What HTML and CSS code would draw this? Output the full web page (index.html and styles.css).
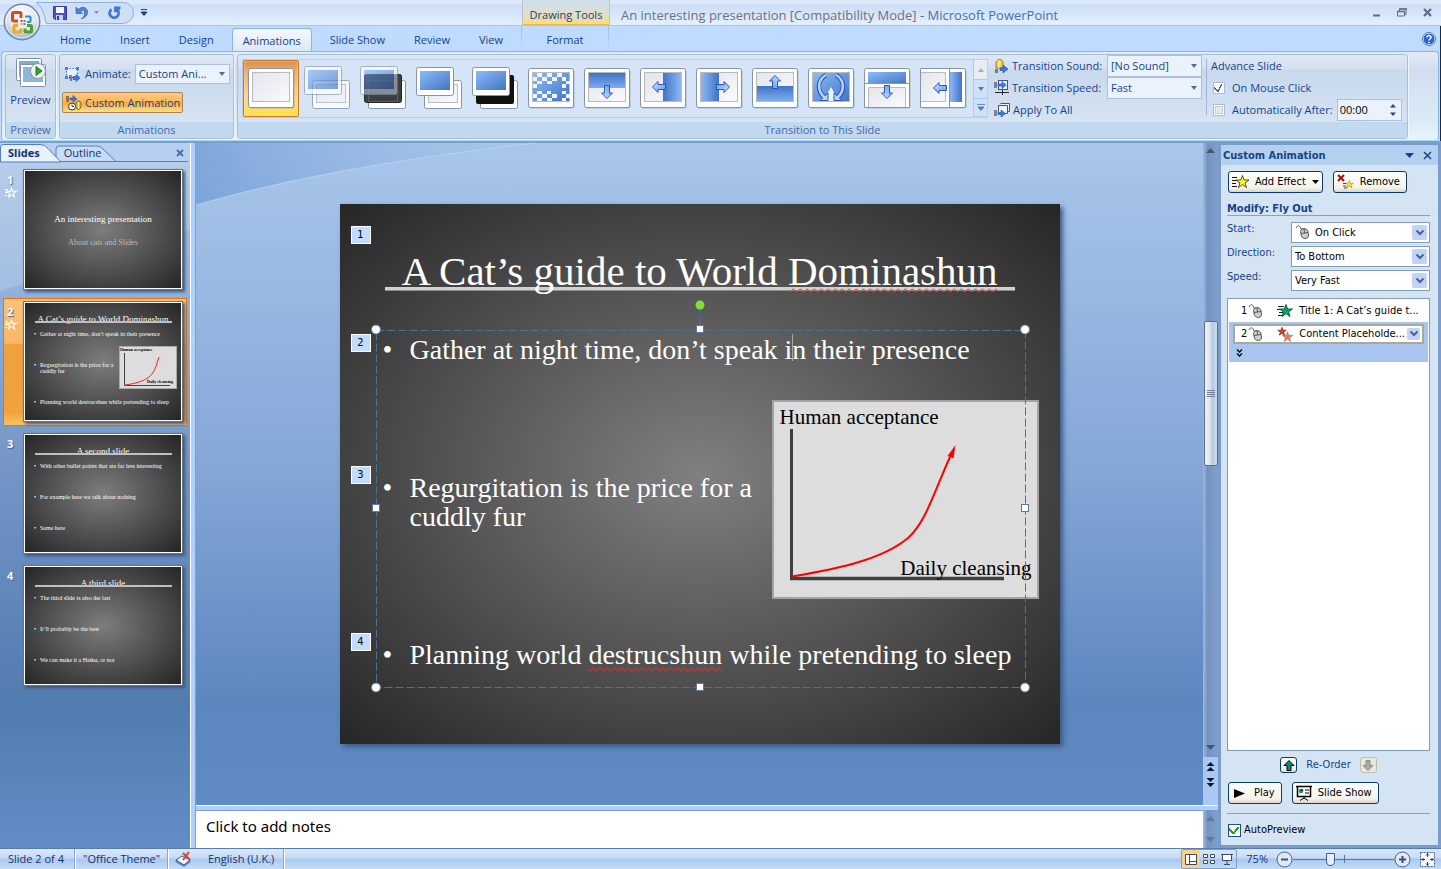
FILE: index.html
```
<!DOCTYPE html>
<html lang="en-GB">
<head>
<meta charset="utf-8">
<title>An interesting presentation [Compatibility Mode] - Microsoft PowerPoint</title>
<link rel="stylesheet" href="styles.css">
</head>
<body>
<svg class="defs" width="0" height="0" aria-hidden="true">
  <defs>
    <linearGradient id="blue" x1="0" y1="0" x2="1" y2="1"><stop offset="0" stop-color="#8dbcf8"/><stop offset="1" stop-color="#4274c4"/></linearGradient>
    <linearGradient id="blueH" x1="0" y1="0" x2="1" y2="0"><stop offset="0" stop-color="#3f73c6"/><stop offset="1" stop-color="#8db8f5"/></linearGradient>
    <linearGradient id="blueR" x1="1" y1="0" x2="0" y2="0"><stop offset="0" stop-color="#3f73c6"/><stop offset="1" stop-color="#8db8f5"/></linearGradient>
    <linearGradient id="blueV" x1="0" y1="0" x2="0" y2="1"><stop offset="0" stop-color="#3f73c6"/><stop offset="1" stop-color="#7eacf0"/></linearGradient>
    <linearGradient id="paper" x1="0" y1="0" x2="1" y2="1"><stop offset="0" stop-color="#e3e5ec"/><stop offset="1" stop-color="#fafafd"/></linearGradient>
    <linearGradient id="arrowFill" x1="0" y1="0" x2="1" y2="1"><stop offset="0" stop-color="#d3e6ff"/><stop offset="1" stop-color="#5b92ec"/></linearGradient>
    <linearGradient id="wave" x1="0" y1="0" x2="1" y2="0"><stop offset="0" stop-color="#5f8ecf" stop-opacity=".55"/><stop offset="1" stop-color="#7fa9de" stop-opacity="0"/></linearGradient>
    <radialGradient id="orb" cx=".5" cy=".3" r=".75"><stop offset="0" stop-color="#ffffff"/><stop offset=".55" stop-color="#dfe6ef"/><stop offset="1" stop-color="#8fa3bd"/></radialGradient>
    <g id="frame"><rect x="6.500" y="9.500" width="45" height="39" rx="2" fill="#7f8fa3" opacity=".5"/><rect x="5.500" y="8.500" width="45" height="39" rx="2" fill="#fff" stroke="#8495ab"/></g>
    <g id="card"><rect x=".5" y=".5" width="37" height="28" rx="2" fill="#fff" stroke="#8495ab"/></g>
    <path id="arr" d="M-6.500 0L-1-5.500V-2.500H6.500V2.500H-1V5.500Z" fill="url(#arrowFill)" stroke="#2a56b8"/>
    <g id="mouse"><path d="M0 3C2-1 4 1 4.500 3S6 4 7 3.500" fill="none" stroke="#555"/><path d="M4.500 6.500Q5 3.500 8 3.500T12 6.500L12.500 11Q12 13.500 9.500 13.500T5.500 11.500Z" fill="#cfcfcf" stroke="#555"/><path d="M5 8.500L12 7.500M8 3.500l.5 4.500" stroke="#555" fill="none"/></g>
    <path id="star" d="M0-6.500L1.600-2H6.500L2.600 .8 4 5.500 0 2.600-4 5.500-2.600 .8-6.500-2H-1.600Z"/>
  </defs>
</svg>

<header class="titlebar">
  <div class="quick">
    <svg class="quick-shape" width="100" height="26" viewBox="0 0 100 26"><path d="M0 2.500H87a10.500 10.500 0 0 1 0 21H10C8 13 6 6 0 2.500Z" fill="#cfe0f6" stroke="#8fb1de"/></svg>
    <button class="tool save" aria-label="Save"><svg width="14" height="14" viewBox="0 0 14 14"><path d="M.5 .5H13.500V13.500H2L.5 12Z" fill="#4d55b8" stroke="#343b96"/><rect x="3" y="1" width="8" height="6" fill="#f4f6ff"/><rect x="3" y="9" width="7" height="5" fill="#c9cfe9"/><rect x="4" y="10" width="2" height="4" fill="#343b96"/></svg></button>
    <button class="tool undo" aria-label="Undo"><svg width="14" height="14" viewBox="0 0 14 14"><path d="M1 1V7.500H7.500L5.500 5.500C8 3.500 10 5 9.500 8 9.200 10 8 11.500 6.500 13 11 11.500 13 8.500 12.500 5 11.500 1 7 0 3.500 3.300Z" fill="#4f82d8" stroke="#3463b8" stroke-width=".7"/></svg></button>
    <svg width="5" height="3" viewBox="0 0 5 3"><path d="M0 0H5L2.500 3Z" fill="#6d94cb"/></svg>
    <button class="tool redo" aria-label="Repeat"><svg width="13" height="14" viewBox="0 0 13 14"><path d="M3.500 3.500A4.500 4.500 0 1 0 9.800 4.500" fill="none" stroke="#4277d2" stroke-width="2.800"/><path d="M6 .5H12.500V2.500L9.500 6.500 6 6Z" fill="#4277d2"/></svg></button>
    <button class="tool more" aria-label="Customise toolbar"><svg width="6" height="7" viewBox="0 0 6 7"><path d="M0 .5H6M0 3H6L3 6.500Z" stroke="#23408a" stroke-width="1" fill="#23408a"/></svg></button>
  </div>
  <div class="context-title">Drawing Tools</div>
  <h1 class="window-title">An interesting presentation [Compatibility Mode] <span>- Microsoft PowerPoint</span></h1>
  <div class="window-buttons">
    <button aria-label="Minimise"><svg width="9" height="9"><path d="M1 7.500H8" stroke="#5b6d88" stroke-width="2"/></svg></button>
    <button aria-label="Restore"><svg width="10" height="9"><path d="M2.500 3V1H9V6.500H7.500M.5 3.500H7.500V8H.5Z" fill="none" stroke="#5b6d88"/><path d="M0 3.500H8M2 1H10" stroke="#5b6d88" stroke-width="1.500"/></svg></button>
    <button aria-label="Close"><svg width="9" height="9"><path d="M1 1L8 8M8 1L1 8" stroke="#5b6d88" stroke-width="2.200"/></svg></button>
  </div>
  <button class="orb" aria-label="Office Button"><svg width="38" height="38" viewBox="0 0 38 38"><circle cx="19" cy="19" r="17.800" fill="url(#orb)" stroke="#7388a5" stroke-width="1.400"/><circle cx="19" cy="19" r="16" fill="none" stroke="#fff" opacity=".7"/><g fill="none" stroke-width="3"><path d="M15 18H11a1.500 1.500 0 0 1-1.500-1.500V11a1.500 1.500 0 0 1 1.500-1.500H16.500A1.500 1.500 0 0 1 18 11V15" stroke="#d9481c"/><path d="M22 13.500h4.500a1 1 0 0 1 1 1v3.500a1 1 0 0 1-1 1H24" stroke="#3a87d2" stroke-width="2.200"/><path d="M24 22.500H27.500a1 1 0 0 1 1 1v4.500a1 1 0 0 1-1 1H23a1 1 0 0 1-1-1V25.500" stroke="#4f9f2c"/><path d="M15 22.500h-3a1 1 0 0 0-1 1V28a1 1 0 0 0 1 1h5a1 1 0 0 0 1-1V25.500" stroke="#f3a81c"/></g><rect x="17.500" y="17" width="2" height="2" fill="#d7421a"/><rect x="20.500" y="17" width="2" height="2" fill="#3a87d2"/><rect x="17.500" y="20" width="2" height="2" fill="#f3a81c"/><rect x="20.500" y="20" width="2" height="2" fill="#4f9f2c"/></svg></button>
</header>

<nav class="tabs">
  <button>Home</button><button>Insert</button><button>Design</button><button class="active">Animations</button><button>Slide Show</button><button>Review</button><button>View</button>
  <button class="context-tab">Format</button>
  <button class="help" aria-label="Help"><svg width="14" height="14" viewBox="0 0 14 14"><circle cx="7" cy="7" r="6" fill="#2a62d8" stroke="#fff"/><circle cx="7" cy="7" r="6.500" fill="none" stroke="#5578b8"/><path d="M5 5.500C5 3 9 3 9 5.300 9 7 7 7 7 8.500M7 9.700V11.200" fill="none" stroke="#fff" stroke-width="1.500"/></svg></button>
</nav>

<section class="ribbon">
  <div class="group preview">
    <button class="group-body preview-button">
      <svg width="30" height="30" viewBox="0 0 30 30"><rect x=".5" y=".5" width="25" height="22" rx="1" fill="#fff" stroke="#7e90a8"/><rect x="3" y="3" width="20" height="16" fill="#79acd8"/><rect x="4.500" y="6.500" width="25" height="22" rx="1" fill="#fff" stroke="#7e90a8"/><rect x="7" y="9" width="20" height="15" fill="#8ab8dd"/><circle cx="22" cy="13" r="7.500" fill="#eef3f3" stroke="#8b9a9e"/><path d="M20 8.500L26 13 20 17.500Z" fill="#38a32b" stroke="#1d7a1c"/></svg>
      <span>Preview</span>
    </button>
    <div class="group-label">Preview</div>
  </div>
  <div class="group animations">
    <div class="group-body">
      <div class="row">
        <svg width="17" height="16" viewBox="0 0 17 16"><path d="M2.500 2.500H13.500V11.500H2.500Z" fill="#e6eefa" stroke="#3c6fb5" stroke-dasharray="1.500 1.500"/><path d="M1 1h3v3H1zM12 1h3v3h-3zM1 10h3v3H1z" fill="#4c7fc5"/><path d="M5 10h3M5 12h3M6 14h2" stroke="#223"/><path d="M9 10.500H12V8.500L16 12 12 15.500V13.500H9Z" fill="#3d79df" stroke="#1c4fae" stroke-width=".6"/></svg>
        <label for="animate">Animate:</label>
        <div class="pick animate-pick"><select id="animate"><option>Custom Ani...</option></select><svg width="6" height="4"><path d="M0 0H6L3 4Z" fill="#4a6fa5"/></svg></div>
      </div>
      <button class="custom-button"><svg width="17" height="16" viewBox="0 0 17 16"><path d="M1 2h3M1 4h3M1 6h3" stroke="#223"/><path d="M5 3H8V.5L12 4 8 7V5H5Z" fill="#3d79df" stroke="#1c4fae" stroke-width=".6"/><circle cx="7" cy="11.500" r="3.500" fill="#fff" stroke="#333"/><path d="M7 9.500V11.500H9" fill="none" stroke="#333"/><path d="M12 6.500C15 5 16 7 16 10S15 15.500 12 14C10 12 10.500 8 12 6.500Z" fill="#e9b53a" stroke="#8a6213"/><path d="M13.500 7v7" stroke="#fff3b8"/></svg>Custom Animation</button>
    </div>
    <div class="group-label">Animations</div>
  </div>
  <div class="group transition">
    <div class="group-body transition-body">
      <div class="gallery">
        <button class="chosen" aria-label="No transition"><svg width="56" height="56"><use href="#frame"/><rect x="9.500" y="12.500" width="37" height="29" fill="url(#paper)" stroke="#bbb"/></svg></button>
        <button aria-label="Fade smoothly"><svg width="56" height="56"><g opacity=".8"><use href="#card" x="13" y="20"/><rect x="17.500" y="24.500" width="29" height="18" fill="url(#paper)" stroke="#bbb"/></g><g opacity=".65"><use href="#card" x="5" y="6"/><rect x="9" y="10" width="30" height="19" fill="url(#blue)"/></g></svg></button>
        <button aria-label="Fade through black"><svg width="56" height="56"><use href="#card" x="13" y="20"/><rect x="9.500" y="14.500" width="37" height="28" rx="2" fill="#3c3f44" stroke="#222"/><rect x="13.500" y="20.500" width="29" height="21" fill="none" stroke="#5a5d63"/><g opacity=".65"><use href="#card" x="5" y="6"/><rect x="9" y="10" width="30" height="19" fill="url(#blue)"/></g><path d="M9 14.500H43V34H9Z" fill="#25364f" opacity=".35"/></svg></button>
        <button aria-label="Cut"><svg width="56" height="56"><use href="#card" x="13" y="20"/><rect x="17.500" y="24.500" width="29" height="18" fill="url(#paper)" stroke="#bbb"/><use href="#card" x="5" y="7"/><rect x="9" y="11" width="30" height="19" fill="url(#blue)"/></svg></button>
        <button aria-label="Cut through black"><svg width="56" height="56"><use href="#card" x="13" y="20"/><rect x="9" y="15" width="38" height="29" rx="2" fill="#111"/><use href="#card" x="5" y="7"/><rect x="9" y="11" width="30" height="19" fill="url(#blue)"/></svg></button>
        <button aria-label="Dissolve"><svg width="56" height="56"><use href="#frame"/><rect x="9.500" y="12.500" width="37" height="29" fill="url(#blue)" stroke="#bbb"/><path d="M14 13h5v4h-5zM24 13h5v4h-5zM34 13h5v4h-5zM10 17h4v4h-4zM19 17h5v4h-5zM29 17h5v4h-5zM39 17h4v4h-4zM14 21h5v3h-5zM24 21h5v3h-5zM43 21h4v3h-4zM10 24h4v4h-4zM39 24h4v4h-4zM14 31h5v3h-5zM10 34h4v4h-4zM19 34h5v4h-5zM24 31h4v3h-4zM29 34h5v4h-5zM39 31h4v3h-4zM43 34h4v4h-4zM14 38h5v3h-5zM24 38h5v3h-5zM39 38h4v3h-4z" fill="#f2f4f9"/></svg></button>
        <button aria-label="Wipe down"><svg width="56" height="56"><use href="#frame"/><rect x="9.500" y="12.500" width="37" height="29" fill="url(#paper)" stroke="#bbb"/><rect x="10" y="13" width="36" height="15" fill="url(#blueV)"/><use href="#arr" transform="translate(28 32) rotate(-90)"/></svg></button>
        <button aria-label="Wipe left"><svg width="56" height="56"><use href="#frame"/><rect x="9.500" y="12.500" width="37" height="29" fill="url(#paper)" stroke="#bbb"/><rect x="28" y="13" width="18" height="28" fill="url(#blueH)"/><use href="#arr" transform="translate(24 27)"/></svg></button>
        <button aria-label="Wipe right"><svg width="56" height="56"><use href="#frame"/><rect x="9.500" y="12.500" width="37" height="29" fill="url(#paper)" stroke="#bbb"/><rect x="10" y="13" width="18" height="28" fill="url(#blueR)"/><use href="#arr" transform="translate(32 27) rotate(180)"/></svg></button>
        <button aria-label="Wipe up"><svg width="56" height="56"><use href="#frame"/><rect x="9.500" y="12.500" width="37" height="29" fill="url(#paper)" stroke="#bbb"/><rect x="10" y="26" width="36" height="15" fill="url(#blueV)"/><use href="#arr" transform="translate(28 22) rotate(90)"/></svg></button>
        <button aria-label="Wedge"><svg width="56" height="56"><use href="#frame"/><rect x="9.500" y="12.500" width="37" height="29" fill="url(#blue)" stroke="#bbb"/><path d="M28 27L36 41H20Z" fill="#eef1f8"/><g fill="none" stroke="#2a56b8" stroke-width="4.500"><path d="M23 15C14 20 14 31 21 37"/><path d="M33 15C42 20 42 31 35 37"/></g><path d="M25 33V40.500H17ZM31 33V40.500H39Z" fill="#b9d5fc" stroke="#2a56b8"/><g fill="none" stroke="#b9d5fc" stroke-width="2.500"><path d="M23 15C14 20 14 31 22 38"/><path d="M33 15C42 20 42 31 34 38"/></g></svg></button>
        <button aria-label="Uncover down"><svg width="56" height="56"><use href="#frame"/><rect x="9" y="12" width="38" height="12" fill="url(#blue)"/><path d="M5.500 23.500H50.500V47.500H5.500Z" fill="#fff" stroke="#8495ab"/><path d="M9.500 47V27.500H46.500V47" fill="url(#paper)" stroke="#bbb"/><use href="#arr" transform="translate(28 32) rotate(-90)"/></svg></button>
        <button aria-label="Uncover left"><svg width="56" height="56"><use href="#frame"/><rect x="35" y="12" width="12" height="30" fill="url(#blueR)"/><path d="M5.500 8.500H34.500V47.500H5.500Z" fill="#fff" stroke="#8495ab"/><path d="M6 12.500H30.500V41.500H6" fill="url(#paper)" stroke="#bbb"/><use href="#arr" transform="translate(25 28)"/></svg></button>
        <div class="gallery-scroll">
          <button disabled aria-label="Previous row"><svg width="6" height="4"><path d="M3 0L6 4H0Z" fill="#a9a9b0"/></svg></button>
          <button aria-label="Next row"><svg width="6" height="4"><path d="M0 0H6L3 4Z" fill="#4f78bb"/></svg></button>
          <button aria-label="More"><svg width="8" height="7"><path d="M0 .5H8M1 3H7L4 6.500Z" fill="#4f78bb" stroke="#4f78bb" stroke-width=".8"/></svg></button>
        </div>
      </div>
      <div class="options">
        <svg width="15" height="15" viewBox="0 0 15 15"><path d="M2 3C4-1 8 0 9 3V9H2Z" fill="#f3cf55" stroke="#a27a18"/><path d="M5 1v8" stroke="#fff6c8"/><path d="M1 11h3M1 13h3" stroke="#223"/><path d="M6 9H9V6L14 10 9 14V11.500H6Z" fill="#3d79df" stroke="#1c4fae" stroke-width=".6"/></svg>
        <label for="sound">Transition Sound:</label>
        <div class="pick"><select id="sound"><option>[No Sound]</option></select><svg width="6" height="4"><path d="M0 0H6L3 4Z" fill="#4a6fa5"/></svg></div>
        <svg width="15" height="16" viewBox="0 0 15 16"><rect x="4.500" y=".5" width="9" height="9" fill="#dfe9f8" stroke="#43557a"/><path d="M0 3h3M0 5h3M0 7h3M1 12.500H15M8.500 10V15" stroke="#223"/><path d="M4 4H8V1.500L12 5 8 8.500V6H4Z" fill="#3d79df" stroke="#1c4fae" stroke-width=".6"/></svg>
        <label for="speed">Transition Speed:</label>
        <div class="pick"><select id="speed"><option>Fast</option></select><svg width="6" height="4"><path d="M0 0H6L3 4Z" fill="#4a6fa5"/></svg></div>
        <button class="apply-all"><svg width="16" height="15" viewBox="0 0 16 15"><path d="M6.500 .5H15.500V8.500H13M4.500 2.500H13.500V10.500H4.500Z" fill="#eef3fb" stroke="#43557a"/><path d="M0 8h3M0 10h3M0 12h3" stroke="#223"/><path d="M4 9.500H7V7L11.500 10.500 7 14V11.500H4Z" fill="#3d79df" stroke="#1c4fae" stroke-width=".6"/></svg>Apply To All</button>
      </div>
      <div class="advance">
        <div>Advance Slide</div>
        <label><input type="checkbox" checked>On Mouse Click</label>
        <div class="auto"><label><input type="checkbox">Automatically After:</label>
          <div class="spin"><input type="text" value="00:00" aria-label="Automatically after"><svg width="6" height="12"><path d="M3 0L6 3.500H0ZM3 12L6 8.500H0Z" fill="#23478c"/></svg></div></div>
      </div>
    </div>
    <div class="group-label">Transition to This Slide</div>
  </div>
</section>

<main class="workspace">
  <aside class="slides-panel">
    <div class="panel-tabs">
      <svg class="panel-tabs-shape" width="188" height="19" viewBox="0 0 188 19"><path d="M56 18.500V6q0-3 3-3H97q4 0 7 4L116 18.500Z" fill="#c9dcf6" stroke="#4f7fbf"/><path d="M0 18.500H188" stroke="#4f7fbf"/><path d="M.5 19V4Q.5 1.500 4 1.500H40q5 0 8 4L61 19Z" fill="#e9f1fd" stroke="#4f7fbf"/></svg>
      <button class="on">Slides</button><button>Outline</button>
      <button class="panel-close" aria-label="Close"><svg width="8" height="8"><path d="M1 1L7 7M7 1L1 7" stroke="#3d6fae" stroke-width="1.800"/></svg></button>
    </div>
    <ol class="thumbs">
      <li><div class="num">1<svg width="12" height="11" viewBox="0 0 12 11"><path d="M0 2.500H3M0 5.500H3M0 8.500H2" stroke="#fff"/><use href="#star" transform="translate(6.500 5.800) scale(.72)" fill="none" stroke="#fff" stroke-width="1.500"/></svg></div>
        <div class="thumb cover"><b>An interesting presentation</b><i>About cats and Slides</i></div></li>
      <li class="current"><div class="num">2<svg width="12" height="11" viewBox="0 0 12 11"><path d="M0 2.500H3M0 5.500H3M0 8.500H2" stroke="#fff"/><use href="#star" transform="translate(6.500 5.800) scale(.72)" fill="none" stroke="#fff" stroke-width="1.500"/></svg></div>
        <div class="thumb guide"><b>A Cat’s guide to World Dominashun</b><p>Gather at night time, don’t speak in their presence</p><p>Regurgitation is the price for a cuddly fur</p><p>Planning world destrucshun while pretending to sleep</p>
          <div class="mini-chart"><svg viewBox="0 0 58 43" width="58" height="43"><path d="M4.500 6V38.500H50" fill="none" stroke="#444"/><path d="M5 38C20 36 28 32 32 27S37 15 39 10" fill="none" stroke="#f22"/></svg><span>Human acceptance</span><span>Daily cleansing</span></div></div></li>
      <li><div class="num">3</div><div class="thumb"><b>A second slide</b><p>With other bullet points that are far less interesting</p><p>For example here we talk about nothing</p><p>Same here</p></div></li>
      <li><div class="num">4</div><div class="thumb"><b>A third slide</b><p>The third slide is also the last</p><p>It’ll probably be the best</p><p>We can make it a Haiku, or not</p></div></li>
    </ol>
  </aside>
  <div class="splitter"></div>
  <section class="editor">
    <div class="stage">
      <svg class="swoosh" viewBox="0 0 1009 662" preserveAspectRatio="none"><path d="M0 0H340C200 16 90 36 0 62Z" fill="url(#wave)"/><path d="M0 62C90 36 200 16 340 0" fill="none" stroke="#c4dbf6" opacity=".6"/></svg>
      <div class="slide">
        <div class="title-rule"></div>
        <h2>A Cat’s guide to World <u>Dominashun</u></h2>
        <ul>
          <li>Gather at night time, don’t speak in their presence</li>
          <li>Regurgitation is the price for a cuddly fur</li>
          <li>Planning world <u>destrucshun</u> while pretending to sleep</li>
        </ul>
        <figure class="chart">
          <figcaption>Human acceptance</figcaption>
          <svg width="267" height="198" viewBox="0 0 267 198"><path d="M19.500 29V178.500" stroke="#404040" stroke-width="3"/><path d="M18 178.500H232" stroke="#404040" stroke-width="3.500"/><path d="M20 176.500C72 168 112 158 136 138C154 122 162 92 178 57" fill="none" stroke="#f00" stroke-width="2"/><path d="M183.500 45L181.500 58.500 175.500 56Z" fill="#f00"/></svg>
          <span>Daily cleansing</span>
        </figure>
        <svg class="selection" width="720" height="540" viewBox="0 0 720 540"><path d="M36.500 126.500H685.500V483.500H36.500ZM360.500 101V126" fill="none" stroke="#4d7298" stroke-dasharray="8 3"/><path d="M452.500 130V157" stroke="#a8a8a8"/><g fill="#fff" stroke="#5c7b9c"><circle cx="36" cy="125.500" r="4.500"/><circle cx="685" cy="125.500" r="4.500"/><circle cx="36" cy="483.500" r="4.500"/><circle cx="685" cy="483.500" r="4.500"/><rect x="356.500" y="121.500" width="7" height="7"/><rect x="356.500" y="479.500" width="7" height="7"/><rect x="32.500" y="300.500" width="7" height="7"/><rect x="681.500" y="300.500" width="7" height="7"/></g><circle cx="360" cy="101" r="4.500" fill="#82dc3a"/></svg>
        <span class="badge one">1</span><span class="badge two">2</span><span class="badge three">3</span><span class="badge four">4</span>
      </div>
    </div>
    <div class="scroll stage-scroll">
      <svg width="9" height="5"><path d="M4.500 0L9 5H0Z" fill="#46566f"/></svg>
      <div class="scroll-thumb"><i></i><i></i><i></i><i></i></div>
      <svg width="9" height="5"><path d="M0 0H9L4.500 5Z" fill="#46566f"/></svg>
      <div class="pager"><svg width="9" height="9"><path d="M4.500 0L8.500 4H.5ZM4.500 5L8.500 9H.5Z" fill="#101828"/></svg><svg width="9" height="9"><path d="M4.500 4L8.500 0H.5ZM4.500 9L8.500 5H.5Z" fill="#101828"/></svg></div>
    </div>
    <div class="h-splitter"></div>
    <div class="notes" contenteditable="true">Click to add notes</div>
    <div class="scroll notes-scroll"><svg width="9" height="5"><path d="M4.500 0L9 5H0Z" fill="#5f78a0"/></svg><svg width="9" height="5"><path d="M0 0H9L4.500 5Z" fill="#5f78a0"/></svg></div>
  </section>
  <aside class="task-pane">
    <div class="pane-title"><h3>Custom Animation</h3><button aria-label="Pane menu"><svg width="9" height="5"><path d="M0 0H9L4.500 5Z" fill="#15428b"/></svg></button><button aria-label="Close pane"><svg width="9" height="9"><path d="M1 1L8 8M8 1L1 8" stroke="#15428b" stroke-width="1.500"/></svg></button></div>
    <div class="pane-body">
      <div class="pane-row effects">
        <button class="xp"><svg width="17" height="14" viewBox="0 0 17 14"><path d="M0 2.500H5M0 5.500H4M0 8.500H4M0 11.500H5" stroke="#111"/><use href="#star" x="10.500" y="7" fill="#ff2" stroke="#222" stroke-width=".8"/></svg>Add Effect<svg width="7" height="4"><path d="M0 0H7L3.500 4Z"/></svg></button>
        <button class="xp"><svg width="17" height="14" viewBox="0 0 17 14"><path d="M1 0L7 6M7 0L1 6" stroke="#a01010" stroke-width="2"/><use href="#star" transform="translate(12.500 9.500) scale(.6)" fill="#fe3" stroke="#a80"/><path d="M6 8.500H9M6 11H9M7 13H10" stroke="#444"/></svg>Remove</button>
      </div>
      <h4>Modify: Fly Out</h4>
      <div class="fields">
        <label for="start">Start:</label><div class="combo with-mouse"><svg class="lead" width="14" height="15"><use href="#mouse"/></svg><select id="start"><option>On Click</option></select><span class="drop"><svg width="8" height="6"><path d="M.5 .5L4 4L7.500 .5" fill="none" stroke="#4d6185" stroke-width="2"/></svg></span></div>
        <label for="direction">Direction:</label><div class="combo"><select id="direction"><option>To Bottom</option></select><span class="drop"><svg width="8" height="6"><path d="M.5 .5L4 4L7.500 .5" fill="none" stroke="#4d6185" stroke-width="2"/></svg></span></div>
        <label for="rate">Speed:</label><div class="combo"><select id="rate"><option>Very Fast</option></select><span class="drop"><svg width="8" height="6"><path d="M.5 .5L4 4L7.500 .5" fill="none" stroke="#4d6185" stroke-width="2"/></svg></span></div>
      </div>
      <div class="effect-list">
        <div class="effect"><span>1</span><svg width="14" height="15"><use href="#mouse"/></svg><svg class="kind" width="16" height="14"><path d="M1 2.500H7M0 5.500H6M2 8.500H7M1 11.500H5" stroke="#222"/><use href="#star" x="9" y="7" fill="#12a06a" stroke="#064"/></svg><span>Title 1: A Cat’s guide t...</span></div>
        <div class="effect-group">
          <div class="effect picked"><span>2</span><svg width="14" height="15"><use href="#mouse"/></svg><svg class="kind" width="16" height="15"><use href="#star" transform="translate(10.500 10) scale(.8)" fill="#f97a50" stroke="#888"/><use href="#star" transform="translate(5 4.500) scale(.65)" fill="#f03a1a" stroke="#711"/></svg><span>Content Placeholde...</span><button class="drop" aria-label="Effect menu"><svg width="8" height="6"><path d="M.5 .5L4 4L7.500 .5" fill="none" stroke="#4d6185" stroke-width="2"/></svg></button></div>
          <button class="expand" aria-label="Expand"><svg width="7" height="8"><path d="M1 .5L3.500 3L6 .5M1 4.500L3.500 7L6 4.500" fill="none" stroke="#000" stroke-width="1.300"/></svg></button>
        </div>
      </div>
      <div class="reorder"><button class="xp mini" aria-label="Move up"><svg width="12" height="11"><path d="M6 .5L11 5.500H8V10.500H4V5.500H1Z" fill="#0d8a7a" stroke="#000"/></svg></button><span>Re-Order</span><button class="xp mini off" disabled aria-label="Move down"><svg width="12" height="11"><path d="M6 10.500L11 5.500H8V.5H4V5.500H1Z" fill="#aaa" stroke="#8a8a80"/></svg></button></div>
      <div class="pane-row playback"><button class="xp"><svg width="16" height="11"><path d="M2 1L13 5.500 2 10Z"/></svg>Play</button><button class="xp"><svg width="16" height="16"><path d="M0 1.500H16M1.500 2V11.500H14.500V2" fill="#fff" stroke="#000" stroke-width="1.500"/><circle cx="5" cy="6" r="2.300" fill="#1a9a3a"/><path d="M5 6V3.700A2.300 2.300 0 0 1 7.300 6Z" fill="#22c"/><path d="M9 5H13M9 8H13M8 12V14M4 15.500L8 13 12 15.500" fill="none" stroke="#000"/></svg>Slide Show</button></div>
      <label class="auto-preview"><input type="checkbox" checked>AutoPreview</label>
    </div>
  </aside>
</main>

<footer class="status">
  <span class="cell count">Slide 2 of 4</span><span class="cell theme">"Office Theme"</span>
  <span class="cell lang"><svg width="17" height="16" viewBox="0 0 17 16"><path d="M1 9L7 5 15 9 9 14Z" fill="#f3f6fc" stroke="#3c5a9a"/><path d="M1 9V11L9 15.500 15 11V9L9 14Z" fill="#6d8fd0" stroke="#3c5a9a" stroke-width=".6"/><path d="M8 2L15 9M14 1L8 9" stroke="#e3401c" stroke-width="2"/></svg>English (U.K.)</span>
  <div class="views"><button class="pressed" aria-label="Normal"><svg width="12" height="11"><path d="M.5 .5H11.500V10.500H.5ZM4.500 .5V10.500M4.500 7.500H11" fill="#fff" stroke="#3a4a68"/></svg></button><button aria-label="Slide Sorter"><svg width="12" height="11"><path d="M.5 .5H4.500V3.500H.5ZM7.500 .5H11.500V3.500H7.500ZM.5 6.500H4.500V9.500H.5ZM7.500 6.500H11.500V9.500H7.500Z" fill="#fff" stroke="#3a4a68"/></svg></button><button aria-label="Slide Show"><svg width="12" height="11"><path d="M0 .5H12M1.500 1V6.500H10.500V1M6 7V10M3 10.500H9" fill="#fff" stroke="#3a4a68"/></svg></button></div>
  <span class="percent">75%</span>
  <button class="round" aria-label="Zoom out"><svg width="17" height="17"><circle cx="8.500" cy="8.500" r="7.500" fill="#dfe9f7" stroke="#3f5f96"/><path d="M5 8.500H12" stroke="#3a5078" stroke-width="2"/></svg></button>
  <input class="zoom" type="range" min="10" max="400" value="150" aria-label="Zoom">
  <button class="round" aria-label="Zoom in"><svg width="17" height="17"><circle cx="8.500" cy="8.500" r="7.500" fill="#dfe9f7" stroke="#3f5f96"/><path d="M5 8.500H12M8.500 5V12" stroke="#3a5078" stroke-width="2"/></svg></button>
  <button class="fit" aria-label="Fit to window"><svg width="15" height="15"><rect x=".5" y=".5" width="14" height="14" fill="#f4f7fc" stroke="#4b628c" stroke-dasharray="2 1"/><path d="M7.500 1V5M7.500 10V14M1 7.500H5M10 7.500H14M6 3.500L7.500 2 9 3.500M6 11.500L7.500 13 9 11.500M3.500 6L2 7.500 3.500 9M11.500 6L13 7.500 11.500 9" fill="none" stroke="#33415e"/></svg></button>
</footer>
</body>
</html>
```
FILE: styles.css
```
* { box-sizing: border-box; }
body {
  margin: 0;
  min-height: 100vh;
  display: flex;
  flex-direction: column;
  font: 11px/16px "Open Sans", "Noto Sans", sans-serif;
  color: #15428b;
  background: #bfdbff;
  box-shadow: inset -1px 0 0 #1b2a44;
}
button, input, select { font: inherit; color: inherit; margin: 0; padding: 0; border: 0; background: none; }
button { display: flex; align-items: center; justify-content: center; white-space: nowrap; }
svg { display: block; flex: none; overflow: visible; }
h1, h2, h3, h4, ul, ol, p, figure { margin: 0; padding: 0; font: inherit; }
.defs { position: absolute; }

.titlebar {
  position: relative;
  display: flex;
  height: 26px;
  background: linear-gradient(#dce9fa 0 4px, #cadef7 5px, #e3effd 24px);
  border-bottom: 1px solid #a4c8ee;
}
.quick { position: relative; flex: 0 0 522px; display: flex; align-items: center; padding-left: 53px; }
.quick-shape { position: absolute; left: 36px; top: 0; }
.tool { position: relative; }
.quick > svg:not(.quick-shape) { position: relative; }
.undo { margin: 0 5px 0 8px; }
.redo { margin: 0 20px 0 9px; }
.context-title {
  flex: 0 0 88px;
  padding-top: 7px;
  text-align: center;
  border: solid #b9c4cf;
  border-width: 0 1px;
  border-bottom: 1px solid #efb73c;
  background: linear-gradient(#cfdff2, #dcdfcf 50%, #f4dc8c);
  white-space: nowrap;
}
.window-title { flex: 1; padding: 6px 0 0 11px; font-size: 13px; line-height: 18px; color: #6b7280; white-space: nowrap; }
.window-title span { color: #4a6ea8; }
.window-buttons { display: flex; gap: 16px; padding: 0 9px 0 0; align-items: center; }
.orb { position: absolute; left: 3px; top: 3px; z-index: 2; }

.tabs { display: flex; height: 25px; padding-left: 49px; gap: 7px; align-items: stretch; }
.tabs button { padding: 3px 11px 0; }
.tabs .active { border: 1px solid #8db2e3; border-bottom: 0; border-radius: 4px 4px 0 0; padding: 2px 10px 0; margin-top: 2px; background: linear-gradient(#f3f8fe, #dbe8f6); box-shadow: 0 0 2px #9fe6f4; }
.tabs .context-tab { width: 88px; border: solid #a9c3e6; border-width: 0 1px; border-image: linear-gradient(#9db9dd, #bfdbff) 1; }
.tabs .help { margin-left: auto; padding: 0 5px 0 0; }

.ribbon {
  display: flex;
  gap: 3px;
  height: 90px;
  padding: 2px 4px 1px 3px;
  margin: 0 2px 0 1px;
  border: 1px solid #8db2e3;
  border-bottom-color: #a9d9f3;
  border-radius: 4px;
  background: linear-gradient(#e2ecf8, #d0def0 20%, #dcebf9 80%, #e4f6fe);
}
.group { display: flex; flex-direction: column; border: 1px solid #a6bfdc; border-radius: 3px; background: linear-gradient(#dee8f5, #d4e0f0 14px, #c8d9ed 15px, #d9e6f4); box-shadow: 1px 1px 0 #eef7fe; min-width: 0; }
.group-body { flex: 1; }
.group-label { height: 16px; text-align: center; color: #4068ae; background: #c1d8ef; }
.preview { width: 51px; }
.preview-button { flex-direction: column; gap: 4px; justify-content: flex-start; padding-top: 3px; }
.animations { width: 175px; }
.animations .group-body { display: flex; flex-direction: column; gap: 8px; padding: 9px 3px 0 2px; align-items: flex-start; }
.row { display: flex; align-items: center; gap: 4px; align-self: stretch; padding-left: 2px; }
.pick { display: grid; align-items: center; width: 95px; height: 22px; border: 1px solid #abc1de; background: #eaf2fb; }
.pick > * { grid-area: 1 / 1; }
.pick select { appearance: none; width: 100%; padding: 0 3px; height: 20px; }
.pick svg { justify-self: end; margin-right: 4px; pointer-events: none; }
.animate-pick { flex: 1; height: 20px; }
.animate-pick select { height: 18px; }
.custom-button { height: 21px; gap: 3px; padding: 0 2px; border: 1px solid #a98650; border-radius: 2px; background: linear-gradient(#fbc983, #fcb95a 45%, #fbaa3c 50%, #fde086); }
.transition { flex: 0 1 1171px; }
.transition-body { display: flex; padding: 0 3px 0 4px; }
.gallery { display: flex; align-self: flex-start; margin-top: 4px; border: 1px solid #bacfe9; background: #d5e5f7; }
.gallery > button { width: 56px; height: 57px; align-items: flex-start; }
.gallery .chosen { border: 1px solid #c77a2c; background: linear-gradient(#d98e4c, #f2ae63 20%, #fbd093 60%, #ffe14d); border-radius: 2px; box-shadow: inset 0 0 2px #fff0b0; }
.gallery .chosen svg { margin: -1px; }
.gallery-scroll { display: grid; grid-template-rows: 20px 19px 18px; width: 14px; margin-left: 2px; }
.gallery-scroll button { border: solid #b2c9e6; border-width: 0 0 1px 1px; background: #cfe1f8; }
.gallery-scroll button:disabled { background: #e9ecf2; }
.options { display: grid; grid-template-columns: 15px 92px 95px; grid-template-rows: repeat(3, 22px); column-gap: 3px; align-items: center; margin: 0 4px 0 6px; white-space: nowrap; align-self: start; }
.options label { min-width: 0; }
.options .apply-all { grid-column: 1 / 3; justify-content: flex-start; gap: 3px; }
.advance { display: grid; grid-template-rows: repeat(3, 22px); align-items: center; align-self: start; padding-left: 5px; white-space: nowrap; background: linear-gradient(#9db7d8, #9db7d8) 0 4px / 1px 56px no-repeat; }
.advance label { display: flex; align-items: center; gap: 7px; }
.advance input[type=checkbox] { appearance: none; width: 12px; height: 12px; margin: 0 0 0 2px; border: 1px solid #a9bdd8; background: #fff; box-shadow: inset 0 0 0 1px #fff, inset 0 0 0 2px #c6c9ce, inset 0 0 0 6px #e6e8ea; }
.advance input:checked { background: linear-gradient(45deg, transparent 35%, #4b5f88 36% 48%, transparent 49%) -2px 1px / 7px 8px no-repeat, linear-gradient(-62deg, transparent 44%, #4b5f88 45% 60%, transparent 61%) 3px 1px / 6px 8px no-repeat, #fff; box-shadow: none; }
.auto { display: flex; gap: 4px; }
.spin { display: grid; align-items: center; width: 65px; height: 22px; border: 1px solid #abc1de; background: #eaf2fb; color: #000; }
.spin > * { grid-area: 1 / 1; }
.spin input { width: 100%; padding-left: 2px; }
.spin svg { justify-self: end; margin-right: 5px; }

.workspace { flex: 1; display: flex; min-height: 0; border-top: 2px solid #7e9dca; background: linear-gradient(#a9c6ea, #86a8d8 45%, #5c86bf 80%, #628cc6); }
.slides-panel { flex: 0 0 190px; background: linear-gradient(162deg, #ffffff2a 0 140px, transparent 142px), linear-gradient(#aac5e8, #90b0dc 22%, #7596c7 45%, #527bb0 80%, #638dc8); }
.panel-tabs { position: relative; display: flex; height: 19px; margin-right: 1px; color: #12307a; background: #b8d0f0; }
.panel-tabs button { position: relative; padding: 0 0 0 8px; }
.panel-tabs .on { font-weight: bold; }
.panel-tabs button + button { padding-left: 24px; }
.panel-tabs-shape { position: absolute; left: 0; top: 0; }
.panel-tabs .panel-close { margin-left: auto; padding: 0 5px 0 0; }
.thumbs { list-style: none; padding: 4px 3px; display: grid; gap: 4px; }
.thumbs li { display: flex; height: 128px; padding: 3px 1px 0 0; }
.thumbs .current { border: 1px solid #e8730e; background: linear-gradient(#fbc27a, #f7b766 35%, #f0a040 36%, #f0a23c 90%, #f8c263); padding: 2px 0 0; }
.num { width: 20px; padding: 3px 0 0 4px; font-weight: bold; color: #fff; text-shadow: 1px 1px 1px #47628f; line-height: 15px; }
.current .num { width: 19px; padding-left: 3px; }
.num svg { margin-left: -2px; }
.thumb {
  position: relative;
  width: 160px;
  height: 121px;
  padding: 11px 10px 0 15px;
  border: 2px solid #fff;
  outline: 1px solid #68737f;
  outline-offset: -1px;
  background: radial-gradient(closest-corner, #7d7d7d, #252525);
  box-shadow: 2px 2px 3px #3f5678;
  color: #fff;
  font: 6px/6px "Liberation Serif", serif;
  display: grid;
  grid-template-rows: 17px 31px 31px 10px;
  white-space: nowrap;
}
.thumb b { font-size: 9px; line-height: 10px; font-weight: normal; justify-self: center; margin-left: -5px; }
.thumb:not(.cover)::before { content: ""; position: absolute; left: 10px; right: 9px; top: 18px; height: 2px; background: #c0c0c0; }
.thumb p { position: relative; font: 6px/6px "Liberation Serif", serif; }
.thumb p::before { content: "•"; position: absolute; left: -6px; }
.cover { padding: 43px 0 0; grid-template-rows: 25px 12px; justify-items: center; }
.cover b { margin: 0; }
.cover i { font: 8px/8px "Liberation Serif", serif; color: #bbb; }
.guide { grid-template-rows: 17px 31px 37px 10px; }
.guide p:nth-of-type(2) { width: 85px; white-space: normal; }
.mini-chart { position: absolute; right: 4px; top: 43px; width: 58px; height: 43px; background: #ddd; border: 1px solid #aaa; color: #000; }
.mini-chart svg { position: absolute; left: 0; top: 0; }
.mini-chart span { position: absolute; left: 0; top: 0; font: bold 4px/5px "Liberation Serif", serif; }
.mini-chart span + span { left: auto; top: auto; right: 3px; bottom: 4px; }
.splitter { flex: 0 0 6px; border-left: 1px solid #fff; background: #aed0fb; border-right: 1px solid #7f9fd0; }

.editor { flex: 1; display: grid; grid-template: 1fr 5px 38px / 1fr 15px; min-width: 0; }
.stage { position: relative; display: flex; align-items: center; justify-content: center; }
.swoosh { position: absolute; left: 0; top: 0; width: 100%; height: 100%; }
.slide { position: relative; flex: none; width: 720px; height: 540px; background: radial-gradient(closest-corner, #808080, #262626); box-shadow: 3px 3px 5px #3c5a85; color: #fff; font-family: "Liberation Serif", "Times New Roman", serif; }
.slide h2 { position: absolute; left: 0; right: 0; top: 43px; text-align: center; font-size: 41px; line-height: 48px; }
.slide u { text-decoration: underline wavy #f03030 1px; text-underline-offset: 3px; }
.title-rule { position: absolute; left: 45px; right: 45px; top: 83px; height: 4px; background: #d0d2d0; border-bottom: 1px solid #8d8d8d; }
.slide ul { position: absolute; left: 70px; top: 131px; display: grid; grid-template-rows: 138px 167px auto; list-style: none; font-size: 28px; line-height: 29px; white-space: nowrap; }
.slide li { position: relative; }
.slide li::before { content: "•"; position: absolute; left: -27px; }
.slide li:nth-child(2) { width: 350px; white-space: normal; }
.chart { position: absolute; left: 432px; top: 196px; width: 267px; height: 199px; background: #ddd; border: 2px solid #a3a3a3; color: #000; font-size: 21px; line-height: 22px; }
.chart svg { position: absolute; left: -2px; top: -2px; }
.chart figcaption { position: absolute; left: 6px; top: 4px; }
.chart span { position: absolute; right: 5px; bottom: 18px; }
.selection { position: absolute; left: 0; top: 0; }
.badge { position: absolute; left: 11px; width: 20px; height: 18px; border: 1px solid #fff; background: #c2dbff; color: #000; text-align: center; font: 11px/16px "DejaVu Sans Condensed", sans-serif; }
.one { top: 22px; } .two { top: 130px; } .three { top: 262px; } .four { top: 429px; }
.scroll { display: flex; flex-direction: column; align-items: center; background: linear-gradient(90deg, #9db9df, #7593c0 30%, #7f9fcc); }
.stage-scroll { padding-top: 5px; }
.scroll-thumb { width: 14px; height: 145px; margin: 168px 0 279px; border: 1px solid #5b6f93; border-radius: 2px; background: linear-gradient(90deg, #f0f2f5, #e0e5ec 40%, #b5c9e2 60%, #cbdcf0); display: flex; flex-direction: column; justify-content: center; align-items: center; gap: 1px; }
.scroll-thumb i { width: 8px; height: 1px; background: #6d7c94; }
.pager { align-self: stretch; margin-top: auto; height: 48px; padding-top: 5px; display: flex; flex-direction: column; align-items: center; gap: 7px; background: #a9c8f3; }
.h-splitter { grid-column: 1 / 3; border-top: 1px solid #fff; background: #aed0fb; }
.notes { background: #fff; color: #000; padding: 5px 10px; font: 15px/20px "Noto Sans", sans-serif; border-top: 1px solid #7f9fd0; }
.notes-scroll { justify-content: space-between; padding: 6px 0; }

.task-pane { flex: 0 0 222px; display: flex; flex-direction: column; border: solid #7b9bca; border-width: 2px 3px 3px; background: #d5e4f2; font: 11px/14px "DejaVu Sans Condensed", "DejaVu Sans", sans-serif; }
.pane-title { display: flex; align-items: center; gap: 9px; height: 20px; padding: 1px 6px 0 2px; background: #b5d0ee; }
.pane-title h3 { flex: 1; font-weight: bold; }
.pane-body { flex: 1; display: flex; flex-direction: column; padding: 6px 8px 8px 6px; }
.pane-row { display: flex; gap: 10px; }
.xp { height: 22px; gap: 6px; padding: 0 6px 0 3px; color: #000; border: 1px solid #0b3a70; border-radius: 3px; background: linear-gradient(#fff, #f3f2ea 80%, #d9d5c8); }
.effects { padding-left: 1px; }
.effects .xp:first-child { padding-right: 3px; }
.pane-body h4 { margin: 9px 0 6px; font-weight: bold; border-bottom: 1px solid #7ea3d8; line-height: 13px; }
.fields { display: grid; grid-template-columns: 64px 1fr; grid-auto-rows: 21px; row-gap: 3px; }
.combo { display: flex; align-items: center; border: 1px solid #7f9db9; background: #fff; color: #000; padding-right: 2px; min-width: 0; }
.combo select { appearance: none; flex: 1; min-width: 0; padding-left: 3px; }
.combo .lead { margin-left: 4px; }
.with-mouse select { padding-left: 5px; }
.drop { display: flex; align-items: center; justify-content: center; width: 15px; height: 15px; border-radius: 2px; background: #c1d3fb; }
.effect-list { flex: 1; margin: 7px 0 2px; border: 1px solid #7f9db9; background: #fff; color: #000; padding: 1px; }
.effect { display: flex; align-items: center; height: 22px; padding: 0 3px 0 12px; gap: 2px; white-space: nowrap; }
.effect .kind { margin: 0 4px 0 12px; }
.effect-group { background: #a8c5f0; padding: 2px 4px 0 4px; height: 40px; }
.picked { height: 20px; padding: 0 2px 0 6px; border: 2px solid #aca899; background: #fff; }
.picked .drop { margin-left: auto; width: 13px; height: 12px; }
.expand { margin: 5px 0 0 3px; }
.reorder { display: flex; justify-content: center; align-items: center; gap: 9px; height: 24px; }
.mini { width: 17px; height: 16px; padding: 0; }
.xp.off { border-color: #c0beb0; background: #e9e8e0; }
.playback { margin-top: 5px; padding: 0 0 9px 1px; border-bottom: 1px solid #7ea3d8; }
.auto-preview { display: flex; align-items: center; gap: 3px; color: #000; margin: 9px 0 0 1px; }
.auto-preview input { appearance: none; width: 13px; height: 13px; border: 1px solid #1c5180; background: linear-gradient(45deg, transparent 35%, #21a121 36% 55%, transparent 56%) 0 3px / 5px 6px no-repeat, linear-gradient(-50deg, transparent 40%, #21a121 41% 62%, transparent 63%) 4px 2px / 6px 7px no-repeat, #fff; }

.status { display: flex; align-items: center; height: 21px; padding-right: 6px; border-top: 1px solid #567db0; background: linear-gradient(#dbe8fa, #c4daf6 45%, #a9c8ef 50%, #c4dcf8); color: #15316e; white-space: nowrap; }
.cell { display: flex; align-items: center; align-self: stretch; border-right: 1px solid #86a7d4; box-shadow: 1px 0 0 #fff; padding: 0 8px; }
.count { width: 75px; }
.theme { width: 93px; }
.lang { width: 116px; gap: 16px; padding-left: 7px; }
.views { display: flex; align-self: stretch; margin-left: auto; border: 1px solid #7f9fcc; border-radius: 2px; }
.views button { width: 18px; }
.views .pressed { background: #fbd089; }
.percent { padding: 0 8px 0 9px; }
.zoom { appearance: none; width: 101px; height: 16px; background: linear-gradient(#5677a8, #5677a8) 0 8px / 100% 1px no-repeat, linear-gradient(#5677a8, #5677a8) 51px 4px / 1px 8px no-repeat; }
.zoom::-webkit-slider-thumb { appearance: none; width: 9px; height: 13px; border: 1px solid #3f5f96; border-radius: 1px 1px 5px 5px; background: #e6eefa; }
.fit { margin-left: 9px; }
```
